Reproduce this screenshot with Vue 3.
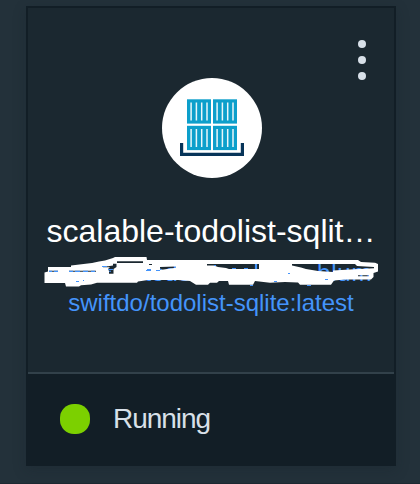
<script setup>
const app = {
  name: 'scalable-todolist-sqlit…',
  image: 'swiftdo/todolist-sqlite:latest',
  status: 'Running'
}
const containers = [[187, 99.3], [213, 99.3], [187, 125.8], [213, 125.8]]
</script>

<template>
  <main class="page">
    <article class="card">
      <section class="body">
        <button class="menu" aria-label="Menu"><i></i><i></i><i></i></button>
        <svg class="logo" width="100" height="100" viewBox="162 78 100 100">
          <circle cx="212" cy="128" r="50" fill="#fff" />
          <g v-for="([x, y], i) in containers" :key="i" :transform="`translate(${x} ${y})`">
            <rect width="24" height="24.3" fill="#0c9fcb" />
            <path d="M4.1 3.3v18M9.4 3.3v18M14.7 3.3v18M20 3.3v18" stroke="#e9f6fa" stroke-width="1.5" />
          </g>
          <path d="M181.6 143v11.4h60.8V143" fill="none" stroke="#073459" stroke-width="3.2" />
        </svg>
        <h1 class="name">{{ app.name }}</h1>
        <svg class="redacted" width="340" height="32" viewBox="42 256 340 32">
          <g class="registry">
            <text x="144.5" y="281.3">todo</text>
            <text x="317" y="281.3" letter-spacing="0.8">blum</text>
          </g>
          <path
            class="scribble"
            fill-rule="evenodd"
            d="M48 267H71V265.5L92 263L99 261.5L105 260.5L113 258L115 257H146.5L147 260H358L361 262L375 262.7L378 264V271.5L373.5 273V277L371 279.5H345L334 280.5L331 284.7H300L298 282.5L285 282L270 282.7L255 281L253 284.7H229L228 281H219L217 282.7H210L208 284.7H196L190 281L178 280H148L138 281.5L137 282.7H97L91 284.5L81 285.3L79 286.5H66L65 283H44.5V272.5L48 271.5Z
            M117 261.2H143V263H117Z
            M103 266.3H108L113 265.5V263.7H116.5V267L113.5 269V273.8H109V271L108 269L110 267.3H103Z
            M49 270.8H58V271.8H49Z M69 270.8H96V271.8H69Z
            M149 264H152V265H149Z
            M160 267L176 266.5V267.8L160 270Z
            M207 264H259V269H229L226 268L218 267L214 265.5H207Z
            M292 264H355L357 266L374 267V268.3L350 269.5L333 270.5V272L318 271L306 269L301 267.5L292 265.5Z
            M358 275.2H369V276.2H358Z"
          />
          <path
            class="traces"
            d="M49 271.4H52M54 271.4H58M69 271.4H73M75 271.4H80M83 271.4H88M91 271.4H95M76 281.5H79M83 280.5H84M102 266.5H107M108 269.5H113M109 271.3H111M146 270.5H151M147 269.5H151M156 270.5H160M214 265.5H216M232 268.5H236M244 268.5H248M250 285.5H253M274 281.5H277M288 273.5H290M307 285.5H311M325 279.5H328"
          />
          <path class="stem" d="M256 264V269" />
        </svg>
        <a class="image">{{ app.image }}</a>
      </section>
      <footer class="status">
        <span class="dot"></span>
        <span class="label">{{ app.status }}</span>
      </footer>
    </article>
  </main>
</template>

<style>
body { margin: 0; background: #23313a; }
</style>

<style scoped>
.page {
  box-sizing: border-box;
  height: 484px;
  padding: 6px 24px 18px 26px;
  background: #23313a;
  border-bottom: 1px solid #1d2932;
  font-family: "Liberation Sans", Arial, sans-serif;
}
.card {
  box-sizing: border-box;
  width: 370px;
  height: 460px;
  border: 2px solid #121e26;
  background: #1b2830;
  box-shadow: 0 4px 12px rgba(18, 30, 38, 0.25);
}
.body {
  box-sizing: border-box;
  display: flex;
  flex-direction: column;
  align-items: center;
  height: 366px;
  padding-top: 32px;
  border-bottom: 2px solid #32414a;
}
.menu {
  display: flex;
  flex-direction: column;
  align-self: flex-end;
  gap: 8px;
  margin: 0 28px 0 0;
  padding: 0;
  border: 0;
  background: none;
}
.menu i {
  width: 8px;
  height: 8px;
  border-radius: 50%;
  background: #d8e0e8;
}
.logo {
  flex: none;
  margin-top: -2px;
  margin-left: 2px;
}
.name {
  margin: 35px 0 0;
  color: #fff;
  font-size: 32px;
  font-weight: 400;
  line-height: 36px;
  white-space: nowrap;
}
.redacted {
  flex: none;
  margin-top: 7px;
  margin-left: 2px;
}
.registry {
  fill: #4494fb;
  font-size: 24px;
}
.scribble { fill: #fff; }
.traces {
  fill: none;
  stroke: #4494fb;
  stroke-width: 1.1;
}
.stem {
  stroke: #4494fb;
  stroke-width: 2.2;
}
.image {
  margin-top: 1px;
  color: #4494fb;
  font-size: 24px;
  line-height: 28px;
  white-space: nowrap;
}
.status {
  box-sizing: border-box;
  display: flex;
  align-items: center;
  gap: 23px;
  height: 90px;
  padding-left: 32px;
  background: #121e26;
}
.dot {
  width: 30px;
  height: 30px;
  border-radius: 14px;
  background: #7cd000;
}
.label {
  color: #d8e0e8;
  font-size: 28px;
  letter-spacing: -1.05px;
  line-height: 32px;
}
</style>
